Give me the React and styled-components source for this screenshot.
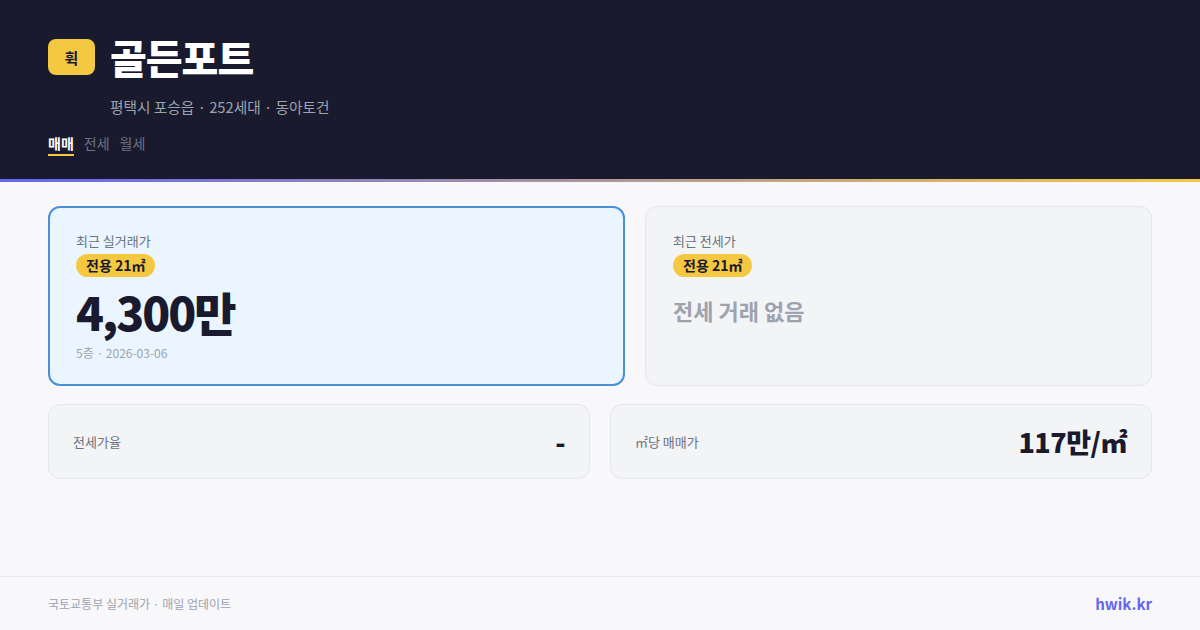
import styled, { createGlobalStyle } from "styled-components";

const GlobalStyle = createGlobalStyle`
    * { box-sizing: border-box; }
    html, body { margin: 0; padding: 0; }
    body {
        font-family: "Noto Sans CJK KR", "Noto Sans", sans-serif;
        background: #f8f8fa;
    }
`;

const Page = styled.div`
    width: 1200px;
    height: 630px;
    display: flex;
    flex-direction: column;
    background: #f8f8fa;
`;

const Header = styled.header`
    background: #1a1a2e;
    padding: 37px 48px 0;
    height: 182px;
    border-bottom: 3px solid transparent;
    border-image: linear-gradient(90deg, #6366f1, #f5c842) 1;
`;

const TitleRow = styled.div`
    display: flex;
    align-items: center;
    gap: 15px;
`;

const Logo = styled.div`
    width: 47px;
    height: 36px;
    border-radius: 8px;
    background: #f5c842;
    color: #1a1a2e;
    font-weight: 700;
    font-size: 15px;
    display: flex;
    align-items: center;
    justify-content: center;
`;

const Title = styled.h1`
    margin: 0;
    color: #ffffff;
    font-size: 40px;
    font-weight: 900;
    letter-spacing: -1px;
    line-height: 40px;
`;

const Sub = styled.p`
    margin: 20px 0 0 62px;
    color: #9ca3af;
    font-size: 14.7px;
    line-height: 20px;
`;

const Tabs = styled.nav`
    display: flex;
    gap: 10px;
    margin-top: 16px;
`;

const Tab = styled.span`
    font-size: 14px;
    line-height: 20px;
    padding-bottom: 1px;
    color: ${p => (p.$active ? "#ffffff" : "#6b7280")};
    font-weight: ${p => (p.$active ? 700 : 400)};
    border-bottom: 2px solid ${p => (p.$active ? "#f5c842" : "transparent")};
`;

const Main = styled.main`
    flex: 1;
    padding: 24px 48px;
    display: flex;
    flex-direction: column;
    gap: 18px;
`;

const TopRow = styled.div`
    display: grid;
    grid-template-columns: 577fr 507fr;
    gap: 20px;
`;

const BottomRow = styled.div`
    display: grid;
    grid-template-columns: 1fr 1fr;
    gap: 20px;
`;

const PriceCard = styled.div`
    height: 180px;
    border-radius: 12px;
    padding: ${p => (p.$highlight ? "24px 26px" : "25px 27px")};
    background: ${p => (p.$highlight ? "#ebf5ff" : "#f3f4f6")};
    border: ${p => (p.$highlight ? "2px solid #4a90d9" : "1px solid #e5e7eb")};
    display: flex;
    flex-direction: column;
    align-items: flex-start;
`;

const Label = styled.div`
    font-size: 13px;
    line-height: 18px;
    color: #6b7280;
`;

const Badge = styled.span`
    margin-top: 4px;
    background: #f5c842;
    color: #1a1a2e;
    font-weight: 700;
    font-size: 14px;
    line-height: 23px;
    padding: 0 10px;
    border-radius: 999px;
`;

const Price = styled.div`
    margin-top: 6px;
    font-size: 46px;
    line-height: 56px;
    font-weight: 900;
    letter-spacing: -2px;
    color: #1a1a2e;
`;

const Meta = styled.div`
    margin-top: 6px;
    font-size: 12px;
    line-height: 16px;
    color: #9ca3af;
`;

const Empty = styled.div`
    margin-top: 18px;
    font-size: 22px;
    line-height: 30px;
    font-weight: 700;
    color: #9ca3af;
`;

const StatCard = styled.div`
    height: 75px;
    border-radius: 12px;
    background: #f3f4f6;
    border: 1px solid #e5e7eb;
    padding: 0 24px;
    display: flex;
    align-items: center;
    justify-content: space-between;
`;

const StatValue = styled.div`
    font-size: 27px;
    font-weight: 900;
    letter-spacing: -0.5px;
    color: #1a1a2e;
`;

const Footer = styled.footer`
    height: 54px;
    border-top: 1px solid #e5e7eb;
    padding: 0 48px;
    display: flex;
    align-items: center;
    justify-content: space-between;
`;

const Source = styled.span`
    font-size: 12px;
    color: #9ca3af;
`;

const Brand = styled.span`
    font-size: 15px;
    font-weight: 700;
    color: #6366f1;
`;

export default function App() {
    return (
        <>
            <GlobalStyle />
            <Page>
                <Header>
                    <TitleRow>
                        <Logo>휙</Logo>
                        <Title>골든포트</Title>
                    </TitleRow>
                    <Sub>평택시 포승읍 · 252세대 · 동아토건</Sub>
                    <Tabs>
                        <Tab $active>매매</Tab>
                        <Tab>전세</Tab>
                        <Tab>월세</Tab>
                    </Tabs>
                </Header>
                <Main>
                    <TopRow>
                        <PriceCard $highlight>
                            <Label>최근 실거래가</Label>
                            <Badge>전용 21㎡</Badge>
                            <Price>4,300만</Price>
                            <Meta>5층 · 2026-03-06</Meta>
                        </PriceCard>
                        <PriceCard>
                            <Label>최근 전세가</Label>
                            <Badge>전용 21㎡</Badge>
                            <Empty>전세 거래 없음</Empty>
                        </PriceCard>
                    </TopRow>
                    <BottomRow>
                        <StatCard>
                            <Label>전세가율</Label>
                            <StatValue>-</StatValue>
                        </StatCard>
                        <StatCard>
                            <Label>㎡당 매매가</Label>
                            <StatValue>117만/㎡</StatValue>
                        </StatCard>
                    </BottomRow>
                </Main>
                <Footer>
                    <Source>국토교통부 실거래가 · 매일 업데이트</Source>
                    <Brand>hwik.kr</Brand>
                </Footer>
            </Page>
        </>
    );
}
